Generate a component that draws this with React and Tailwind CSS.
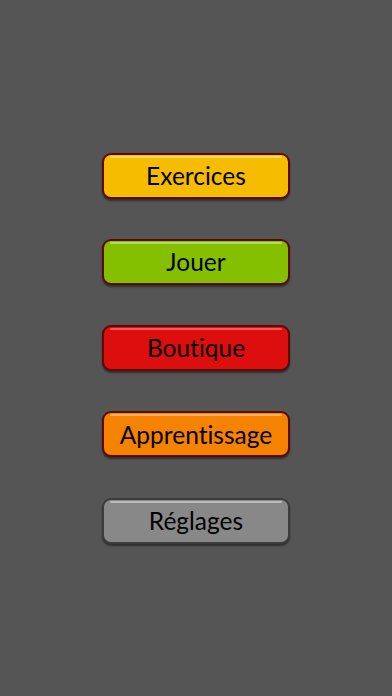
export default function App() {
  const buttons = [
    { label: "Exercices", cls: "bg-[#f6bd00] border-[#5c0a08]", hi: "bg-[#ffe070]" },
    { label: "Jouer", cls: "bg-[#84bf00] border-[#5c0a08]", hi: "bg-[#c0e870]" },
    { label: "Boutique", cls: "bg-[#dd0e0e] border-[#5c0a08]", hi: "bg-[#f07070]" },
    { label: "Apprentissage", cls: "bg-[#f58200] border-[#5c0a08]", hi: "bg-[#ffc070]" },
    { label: "Réglages", cls: "bg-[#888888] border-[#3c3c3c]", hi: "bg-[#c8c8c8]" },
  ];
  return (
    <div className="w-[392px] h-[696px] bg-[#555555] flex flex-col items-center justify-center gap-[40.25px]">
      {buttons.map((b) => (
        <div
          key={b.label}
          className={`relative w-[188px] h-[46px] rounded-[9px] border-2 ${b.cls} shadow-[0_2px_2px_rgba(0,0,0,0.45)] flex items-center justify-center`}
        >
          <div className={`absolute left-[6px] right-[6px] top-[1px] h-[2px] rounded-full ${b.hi} opacity-80`} />
          <span
            className="text-[24.5px] text-black leading-none mt-[1px] [font-variant-ligatures:none] [font-feature-settings:'liga'_0]"
            style={{ fontFamily: '"Gill Sans", Lato, "Open Sans", sans-serif' }}
          >
            {b.label}
          </span>
        </div>
      ))}
    </div>
  );
}
